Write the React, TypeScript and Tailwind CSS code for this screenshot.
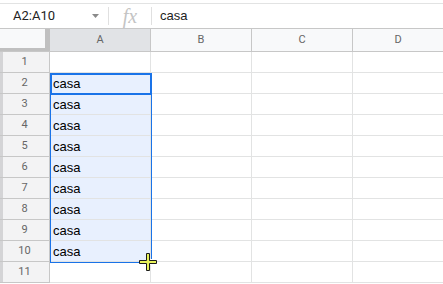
import React from "react";

const cols = ["A", "B", "C", "D"];
const rows = [1, 2, 3, 4, 5, 6, 7, 8, 9, 10, 11];

export default function App() {
  return (
    <div className="w-[443px] h-[284px] overflow-hidden bg-white relative" style={{ fontFamily: "Roboto, 'Liberation Sans', sans-serif" }}>
      <div className="h-[4px] border-b border-[#e2e3e3]" />
      {/* formula bar */}
      <div className="h-[25px] flex items-center border-b border-[#c7c7c7]">
        <div className="w-[108px] flex items-center pl-[13px] pr-[8px]">
          <span className="text-[13px] text-[#222] flex-1" style={{ fontFamily: "Roboto, sans-serif" }}>A2:A10</span>
          <svg width="7" height="4" viewBox="0 0 7 4" className="mr-[1px]"><path d="M0 0 L7 0 L3.5 4 Z" fill="#8a8a8a" /></svg>
        </div>
        <div className="w-px h-[18px] bg-[#e0e0e0]" />
        <div className="w-[42px] flex items-center justify-center">
          <span className="text-[20px] italic text-[#c4c4c4] leading-none" style={{ fontFamily: "'Liberation Serif', serif" }}>fx</span>
        </div>
        <div className="w-px h-[18px] bg-[#e0e0e0]" />
        <span className="pl-[8px] text-[13px] text-[#222]" style={{ fontFamily: "'Liberation Sans', Arial, sans-serif" }}>casa</span>
      </div>
      {/* header row */}
      <div className="flex h-[23px] border-b border-[#c7c7c7]">
        <div className="w-[50px] shrink-0 flex">
          <div className="w-[45px] flex flex-col">
            <div className="flex-1 bg-[#f8f9fa]" />
            <div className="h-[3px] bg-[#c0c0c0]" />
          </div>
          <div className="w-[5px] bg-[#c0c0c0]" />
        </div>
        {cols.map((c, i) => (
          <div
            key={c}
            className={`${i === 3 ? "flex-1" : "w-[101px] border-r border-[#c7c7c7]"} shrink-0 flex items-center justify-center text-[11px] text-[#666] ${i === 0 ? "bg-[#e1e3e6]" : "bg-[#f8f9fa]"}`}
          >
            {c}
          </div>
        ))}
      </div>
      {/* rows */}
      {rows.map((r) => {
        const sel = r >= 2 && r <= 10;
        return (
          <div key={r} className="flex h-[21px]">
            <div className="w-[50px] shrink-0 flex border-r border-b border-[#c7c7c7] bg-[#f3f3f4]">
              <div className="w-[3px] bg-[#d4d4d6]" />
              <div className="flex-1 flex items-center justify-center text-[11px] text-[#666] pr-[3px] pt-[1px]">{r}</div>
            </div>
            {cols.map((c, i) => (
              <div
                key={c}
                className={`${i === 3 ? "flex-1" : "w-[101px] border-r"} shrink-0 border-b border-[#e2e3e3] flex items-center pl-[3px] pt-[2px] text-[13px] text-black ${sel && i === 0 ? "bg-[#e8f0fe]" : "bg-white"}`}
                style={{ fontFamily: "'Liberation Sans', Arial, sans-serif" }}
              >
                {sel && i === 0 ? "casa" : ""}
              </div>
            ))}
          </div>
        );
      })}
      {/* selection range border */}
      <div className="absolute left-[50px] top-[73px] w-[102px] h-[190px] border border-[#1a73e8] pointer-events-none" />
      {/* active cell */}
      <div className="absolute left-[50px] top-[73px] w-[102px] h-[22px] border-2 border-[#1a73e8] pointer-events-none" />
      {/* fill handle */}
      <div className="absolute left-[148px] top-[259px] w-[6px] h-[6px] bg-[#1a73e8] border border-white" />
      {/* crosshair cursor */}
      <svg className="absolute left-[139px] top-[253px]" width="18" height="18" viewBox="0 0 18 18">
        <path d="M7.5 0.5 H10.5 V7.5 H17.5 V10.5 H10.5 V17.5 H7.5 V10.5 H0.5 V7.5 H7.5 Z" fill="#e8f25a" stroke="#1b1b1b" strokeWidth="1" />
      </svg>
    </div>
  );
}
